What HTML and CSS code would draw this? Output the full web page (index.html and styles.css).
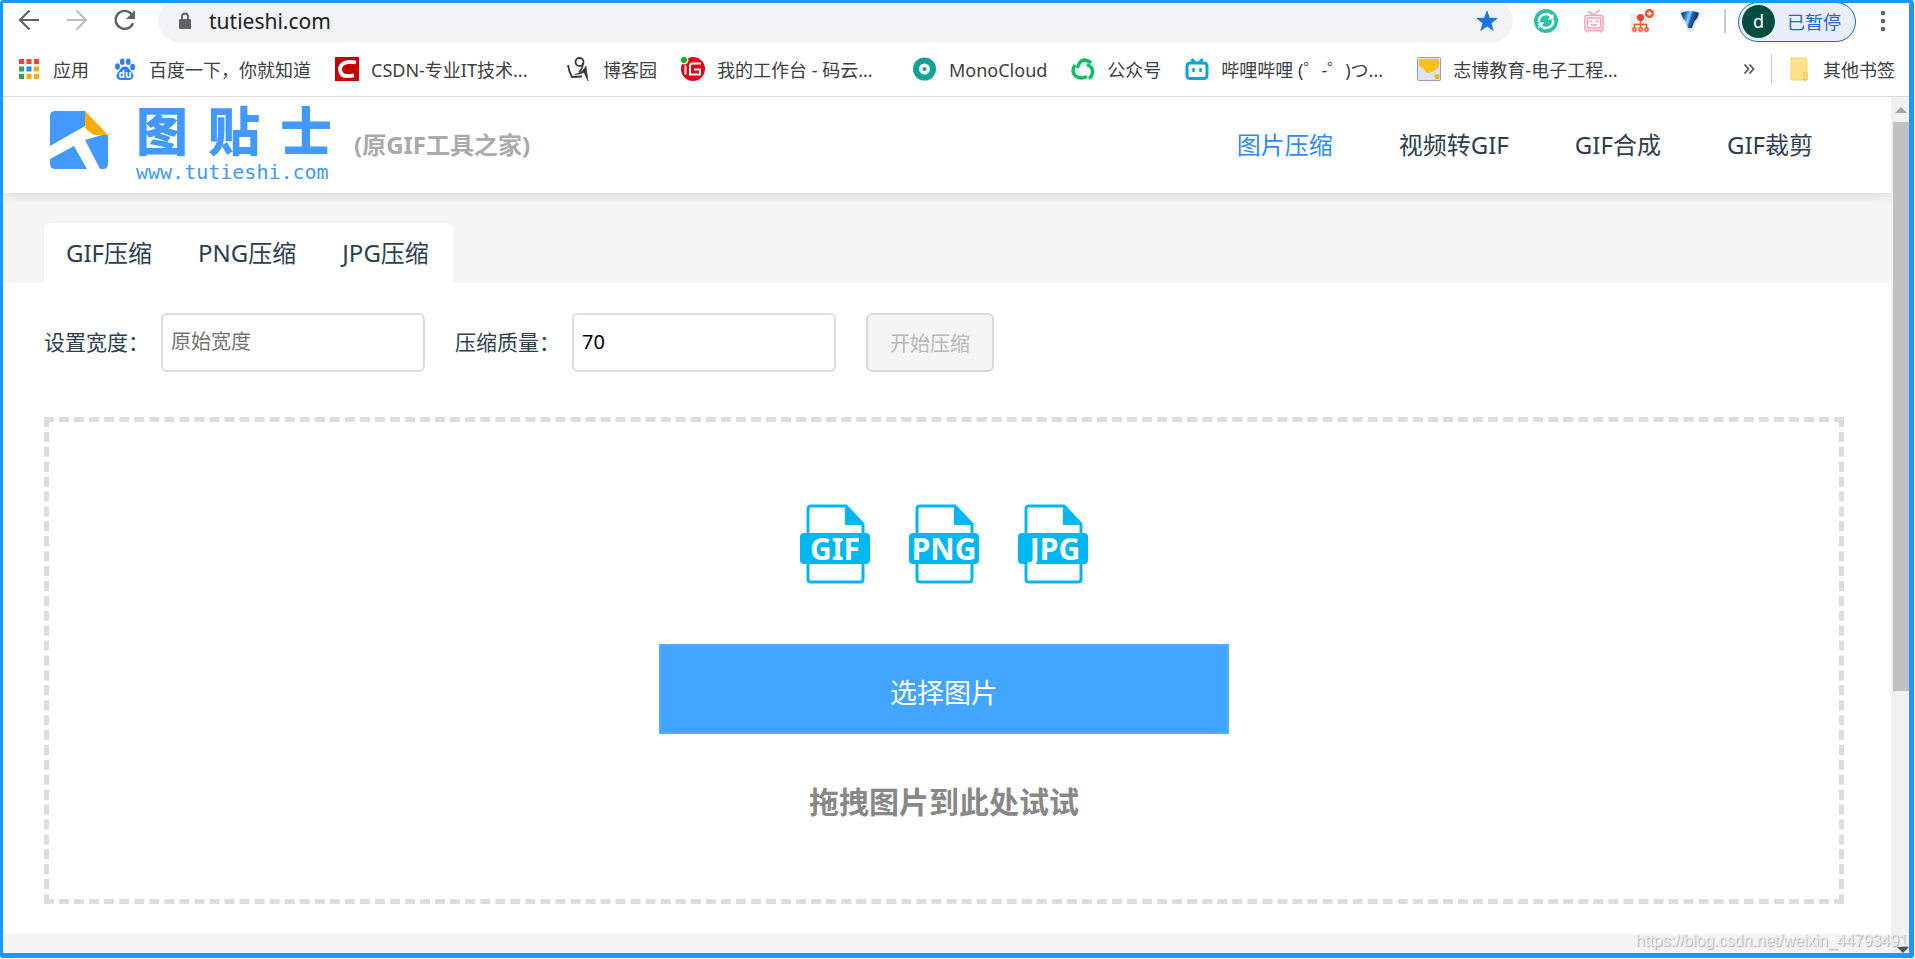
FILE: index.html
```html
<!DOCTYPE html>
<html lang="zh-CN">
<head>
<meta charset="utf-8">
<title>图贴士</title>
<link rel="stylesheet" href="styles.css">
</head>
<body>
<div class="window">
  <div class="toolbar">
    <div class="nav-buttons">
      <button class="icon-button" aria-label="后退"><svg width="24" height="24" viewBox="0 0 24 24" fill="none" stroke="#5f6368" stroke-width="2.2"><path d="M22 12H3.5M12.5 2.5L3 12l9.500 9.500"/></svg></button>
      <button class="icon-button" aria-label="前进"><svg width="24" height="24" viewBox="0 0 24 24" fill="none" stroke="#babcbe" stroke-width="2.200"><path d="M2 12h18.500M11.500 2.500L21 12l-9.500 9.500"/></svg></button>
      <button class="icon-button" aria-label="刷新"><svg width="24" height="24" viewBox="0 0 24 24"><path d="M20 15.200A9 9 0 1 1 18.500 6" fill="none" stroke="#5f6368" stroke-width="2.400"/><path d="M22 2v9h-9z" fill="#5f6368"/></svg></button>
    </div>
    <div class="omnibox">
      <svg width="14" height="18" viewBox="0 0 14 18"><rect x="1" y="7" width="12" height="10" rx="1" fill="#5f6368"/><path d="M4 8V4.500a3 3 0 0 1 6 0V8" fill="none" stroke="#5f6368" stroke-width="1.800"/></svg>
      <input class="address" type="text" value="tutieshi.com" aria-label="地址">
      <button class="icon-button" aria-label="收藏"><svg width="24" height="24" viewBox="0 0 24 24"><path d="M12 1l2.800 7.800 8.200.3-6.500 5.100 2.300 8L12 17.500 5.200 22.200l2.300-8L1 9.100l8.200-.3z" fill="#1a73e8"/></svg></button>
    </div>
    <div class="extensions">
      <svg width="24" height="24" viewBox="0 0 24 24"><circle cx="12" cy="12" r="12" fill="#2fc0a4"/><g fill="none" stroke="#fff" stroke-width="2.400"><path d="M5 13a7 7 0 0 1 12.500-5.200M19 11a7 7 0 0 1-12.500 5.200"/></g><path d="M19.500 4.500v6h-6zM4.500 19.500v-6h6z" fill="#fff"/></svg>
      <svg width="24" height="24" viewBox="0 0 24 24" fill="none" stroke="#f99fbc" stroke-width="1.500"><rect x="3" y="6.500" width="18" height="15" rx="1.500"/><rect x="5.500" y="9" width="13" height="10"/><path d="M12 6L6 2.500M12 6l5.500-5M5 21.500v2M19 21.500v2M7.500 13l2.500-1M16.500 13L14 12M9.500 15c0 2 2.500 2 2.500 0 0 2 2.500 2 2.500 0"/></svg>
      <svg width="24" height="24" viewBox="0 0 24 24"><rect x="0" y="5" width="20" height="19" rx="2" fill="#eee"/><g fill="none" stroke="#f05a28" stroke-width="1.500"><path d="M10.500 10v9M4.500 19v-3.500h12V19"/><circle cx="4.500" cy="20.500" r="1.700"/><circle cx="10.500" cy="20.500" r="1.700"/><circle cx="16.500" cy="20.500" r="1.700"/></g><circle cx="10.500" cy="8.500" r="3.500" fill="#f0402c"/><circle cx="19.500" cy="4.500" r="4.500" fill="#ff4b20"/><path d="M19.500 2v5M17 4.500h5" stroke="#fff" stroke-width="1.500"/></svg>
      <svg width="24" height="24" viewBox="0 0 24 24"><defs><linearGradient id="pin" x1="0" x2="1" y2=".3"><stop offset="0" stop-color="#111c30"/><stop offset=".3" stop-color="#1a7ed8"/><stop offset=".5" stop-color="#8fd2ff"/><stop offset=".65" stop-color="#1560b8"/><stop offset="1" stop-color="#061c4c"/></linearGradient></defs><path d="M4 2q9-3 17 0 3 3 0 8l-5 7v5q-3 2-7 0v-4L3 10Q0 5 4 2z" fill="#e4e4e4"/><path d="M3 4q9-4 18 0-1 5-5 9l-2 6h-4l-2-6Q4 9 3 4z" fill="url(#pin)"/></svg>
    </div>
    <div class="account">
      <button class="profile"><span class="avatar">d</span><span>已暂停</span></button>
      <button class="icon-button menu-button" aria-label="菜单"><svg width="6" height="22" viewBox="0 0 6 22" fill="#5f6368"><circle cx="3" cy="3" r="2.300"/><circle cx="3" cy="11" r="2.300"/><circle cx="3" cy="19" r="2.300"/></svg></button>
    </div>
  </div>

  <nav class="bookmarks" aria-label="书签">
    <a class="bookmark" href="#"><svg width="24" height="24" viewBox="0 0 24 24"><g fill="#f04336"><path d="M2 2h5v5H2zM9.500 2h5v5h-5zM17 2h5v5h-5z"/></g><path d="M2 9.500h5v5H2zM2 17h5v5H2z" fill="#34a160"/><path d="M9.500 9.500h5v5h-5z" fill="#1e8cf0"/><path d="M17 9.500h5v5h-5zM9.500 17h5v5h-5zM17 17h5v5h-5z" fill="#f9ab08"/></svg><span>应用</span></a>
    <a class="bookmark" href="#"><svg width="24" height="24" viewBox="0 0 24 24" fill="#2b7fff"><ellipse cx="4.500" cy="9.500" rx="2.400" ry="3.200"/><ellipse cx="9.300" cy="4.800" rx="2.300" ry="3.200"/><ellipse cx="15.300" cy="4.800" rx="2.300" ry="3.200"/><ellipse cx="19.600" cy="10" rx="2.400" ry="3.200"/><path d="M12 9.500c4 0 4 3 7 6s1 7.500-3 7.500H8c-4 0-6-4-3-7.500s3-6 7-6z"/><text x="12" y="21" class="paw-text">du</text></svg><span>百度一下，你就知道</span></a>
    <a class="bookmark" href="#"><svg width="24" height="24" viewBox="0 0 24 24"><path d="M0 0h24v24H0z" fill="#c90000"/><path d="M21 5.500q-7-1.500-11.500.5Q5 8 5 12.500 5.500 19 12 19q4 0 7-.6" fill="none" stroke="#fff" stroke-width="3.800"/></svg><span class="clipped">CSDN-专业IT技术...</span></a>
    <a class="bookmark" href="#"><svg width="24" height="24" viewBox="0 0 24 24" fill="none" stroke="#3b3936"><circle cx="12.500" cy="5" r="4" stroke-width="1.800"/><path d="M1 8q1 7 4 12l10-.5" stroke-width="1.800"/><path d="M19 9q-3 6-11 8.500 6-.5 9-2l4 8.500-2-15z" fill="#3b3936" stroke-width=".6"/><path d="M16 6q0 5-4 9" stroke-width="1.600"/></svg><span>博客园</span></a>
    <a class="bookmark" href="#"><svg width="24" height="24" viewBox="0 0 24 24"><circle cx="12" cy="12" r="12" fill="#dc0a18"/><circle cx="3" cy="3" r="4.500" fill="#fff"/><circle cx="3" cy="3" r="3" fill="#00b50b"/><path d="M20 6.500h-8.500q-2.500 0-2.500 2.500v8.500h10v-5h-6M4.500 8.500v9" fill="none" stroke="#fff" stroke-width="2"/></svg><span class="clipped">我的工作台 - 码云...</span></a>
    <a class="bookmark" href="#"><svg width="24" height="24" viewBox="0 0 24 24"><circle cx="11.500" cy="12" r="11.500" fill="#13a294"/><circle cx="11.500" cy="12" r="5.500" fill="#fff"/><circle cx="11.500" cy="12" r="2" fill="#13a294"/></svg><span>MonoCloud</span></a>
    <a class="bookmark" href="#"><svg width="24" height="24" viewBox="0 0 24 24" fill="none" stroke="#07c160" stroke-width="3.400"><path d="M6.500 11Q8 4 13 3q4 0 7 3"/><path d="M4 8Q0 14 4 18.500q5 4.500 12 1"/><path d="M16 7.500q6 2.500 5.500 8-.5 4-3.500 6"/></svg><span>公众号</span></a>
    <a class="bookmark" href="#"><svg width="24" height="24" viewBox="0 0 24 24" fill="none" stroke="#05a6dc" stroke-width="3"><rect x="2" y="6" width="20" height="15.500" rx="3"/><path d="M6.500 2l3 3.500M17.500 2l-3 3.500"/><path d="M8.500 11v4M15.500 11v4" stroke-width="2.400"/></svg><span class="clipped">哔哩哔哩 (゜-゜)つ...</span></a>
    <a class="bookmark" href="#"><svg width="24" height="24" viewBox="0 0 24 24"><rect x=".5" y=".5" width="23" height="23" rx="1" fill="#dce5f5" stroke="#8ba0c4"/><path d="M2 2h20v5q0 5-4 6-3 3-6 3-4 0-5-4-5-2-5-5z" fill="#fbc11b"/><circle cx="20" cy="19.500" r="2.600" fill="#f5b514"/></svg><span class="clipped">志博教育-电子工程...</span></a>
    <div class="bookmarks-end">
      <button class="icon-button" aria-label="更多书签"><svg width="12" height="12" viewBox="0 0 12 12" fill="none" stroke="#55585c" stroke-width="1.800"><path d="M1.500 1.500L5.500 6l-4 4.500M6.500 1.500l4 4.500-4 4.500"/></svg></button>
      <a class="bookmark folder" href="#"><svg width="18" height="24" viewBox="0 0 18 24"><path d="M1 1h14q2 0 2 2v20H1z" fill="#ffe28a" stroke="#f7d568"/><path d="M14 23v-7q3-1 3 1v6z" fill="#ffe28a" stroke="#e6bd42"/></svg><span>其他书签</span></a>
    </div>
  </nav>

  <div class="viewport">
    <div class="page">
      <header class="site-header">
        <a class="brand" href="#">
          <svg width="58" height="58" viewBox="0 0 58 58"><path d="M5 0h30v15L0 35V5q0-5 5-5zM0 48l24-13 13 23H5q-5 0-5-5zM35 29l17-5h6v29q0 5-5 5h-3z" fill="#4299ff"/><path d="M35 0l23 24H44l-7-5q-2-2-2-5z" fill="#ffad00"/></svg>
          <span class="wordmark"><span class="name"><span>图</span><span>贴</span><span>士</span></span><span class="domain">www.tutieshi.com</span></span>
        </a>
        <strong class="former-name">(原GIF工具之家)</strong>
        <nav class="site-nav">
          <a class="active" href="#">图片压缩</a>
          <a href="#">视频转GIF</a>
          <a href="#">GIF合成</a>
          <a href="#">GIF裁剪</a>
        </nav>
      </header>
      <div class="tab-strip">
        <nav class="tabs"><a href="#">GIF压缩</a><a href="#">PNG压缩</a><a href="#">JPG压缩</a></nav>
      </div>
      <main class="content">
        <form class="settings">
          <label for="width">设置宽度：</label>
          <input class="field" id="width" type="text" placeholder="原始宽度">
          <label for="quality">压缩质量：</label>
          <input class="field" id="quality" type="text" value="70">
          <button class="start" type="button" disabled>开始压缩</button>
        </form>
        <section class="dropzone">
          <div class="formats">
            <svg class="format" viewBox="0 0 70 80"><path d="M8 29V5q0-3 3-3h35l17 18v9M8 59v16q0 3 3 3h49q3 0 3-3V59" class="outline"/><path d="M45 1l19 20H45z"/><rect y="29" width="70" height="31" rx="4"/><text x="35" y="56">GIF</text></svg>
            <svg class="format" viewBox="0 0 70 80"><path d="M8 29V5q0-3 3-3h35l17 18v9M8 59v16q0 3 3 3h49q3 0 3-3V59" class="outline"/><path d="M45 1l19 20H45z"/><rect y="29" width="70" height="31" rx="4"/><text x="35" y="56">PNG</text></svg>
            <svg class="format" viewBox="0 0 70 80"><path d="M8 29V5q0-3 3-3h35l17 18v9M8 59v16q0 3 3 3h49q3 0 3-3V59" class="outline"/><path d="M45 1l19 20H45z"/><rect y="29" width="70" height="31" rx="4"/><text x="37" y="56">JPG</text></svg>
          </div>
          <button class="choose" type="button">选择图片</button>
          <p class="hint">拖拽图片到此处试试</p>
        </section>
      </main>
    </div>
    <div class="scrollbar">
      <svg class="arrow-up" width="12" height="6" viewBox="0 0 12 6"><path d="M6 0l6 6H0z" fill="#a3a3a3"/></svg>
      <div class="thumb"></div>
      <svg class="arrow-down" width="12" height="6" viewBox="0 0 12 6"><path d="M0 0h12L6 6z" fill="#505050"/></svg>
    </div>
  </div>
  <div class="watermark">https://blog.csdn.net/weixin_44793491</div>
</div>
</body>
</html>
```
FILE: styles.css
```css
* {
  box-sizing: border-box;
}

body {
  margin: 0;
  background: #fff;
  font-family: "Noto Sans", "Noto Sans CJK SC", sans-serif;
  color: #2c3e50;
}

a {
  color: inherit;
  text-decoration: none;
}

button,
input {
  font-family: inherit;
}

svg {
  display: block;
  flex: none;
}

.window {
  position: relative;
  display: flex;
  flex-direction: column;
  height: calc(100vh - 1px);
  margin-right: 1px;
  overflow: hidden;
  border: solid #1a9aff;
  border-width: 3px 5px 5px 3px;
  border-radius: 3px;
}

/* Browser toolbar */

.toolbar {
  display: flex;
  flex: none;
  align-items: flex-end;
  height: 39px;
  overflow: hidden;
}

.icon-button {
  display: flex;
  padding: 0;
  border: 0;
  background: none;
}

.nav-buttons {
  display: flex;
  gap: 24px;
  padding: 0 21px 10px 14px;
}

.omnibox {
  display: flex;
  flex: 1;
  align-items: center;
  height: 42px;
  padding: 2px 14px 2px 20px;
  border-radius: 21px;
  background: #f1f3f4;
}

.address {
  flex: 1;
  min-width: 0;
  margin-left: 17px;
  padding: 0;
  border: 0;
  background: none;
  font-size: 21px;
  line-height: 28px;
  color: #202124;
}

.extensions {
  display: flex;
  gap: 24px;
  padding: 0 22px 9px 21px;
}

.account {
  display: flex;
  align-items: flex-end;
}

.account::before {
  content: "";
  width: 2px;
  height: 24px;
  margin: 0 12px 9px 0;
  background: #ccc;
}

.profile {
  display: flex;
  align-items: center;
  gap: 12px;
  height: 40px;
  padding: 0 14px 2px 3px;
  border: 1px solid #1b66d0;
  border-radius: 20px;
  background: #e9eefa;
  font-size: 18px;
  color: #1b66d0;
}

.avatar {
  width: 33px;
  height: 33px;
  border-radius: 50%;
  background: #004d40;
  font-size: 18px;
  line-height: 32px;
  text-align: center;
  color: #fff;
}

.menu-button {
  padding: 0 23px 10px 24px;
}

/* Bookmarks bar */

.bookmarks {
  display: flex;
  flex: none;
  align-items: center;
  gap: 24px;
  height: 55px;
  padding: 0 14px;
  border-bottom: 1px solid #d9dbdf;
  font-size: 18px;
  line-height: 28px;
  white-space: nowrap;
  color: #3c4043;
}

.bookmark {
  display: flex;
  align-items: center;
  gap: 12px;
}

.bookmark span {
  padding-top: 2px;
}

.clipped {
  width: 172px;
}

.bookmarks-end {
  display: flex;
  align-items: center;
  gap: 16px;
  margin-left: auto;
}

.folder {
  gap: 15px;
  padding-left: 18px;
  border-left: 1px solid #ccc;
}

/* Page */

.viewport {
  display: flex;
  flex: 1;
  min-height: 0;
}

.page {
  flex: 1;
  overflow: hidden;
  background: #f5f5f5;
}

.site-header {
  display: flex;
  align-items: center;
  height: 96px;
  padding: 0 78px 4px 47px;
  background: #fff;
  box-shadow: 0 2px 12px rgba(0, 0, 0, .12);
  font-size: 24px;
}

.brand {
  display: flex;
  align-items: center;
  gap: 28px;
  padding-bottom: 6px;
  color: #4299ff;
}

.wordmark {
  display: flex;
  flex-direction: column;
  gap: 8px;
  width: 196px;
  padding-top: 6px;
}

.name {
  display: flex;
  justify-content: space-between;
  font-family: "Noto Sans CJK SC", sans-serif;
  font-size: 52px;
  font-weight: 900;
  line-height: 50px;
}

.domain {
  font-family: "DejaVu Sans Mono", monospace;
  font-size: 20px;
  line-height: 20px;
}

.former-name {
  margin-left: 22px;
  color: #aaa;
}

.site-nav {
  display: flex;
  gap: 66px;
  margin-left: auto;
}

.active {
  color: #2d8cff;
}

.tab-strip {
  padding: 30px 41px 0;
}

.tabs {
  display: inline-flex;
  gap: 46px;
  height: 60px;
  padding: 0 24px 0 22px;
  border-radius: 6px 6px 0 0;
  background: #fff;
  font-size: 24px;
  line-height: 60px;
  vertical-align: top;
}

.content {
  padding: 30px 47px 30px 41px;
  background: #fff;
}

.settings {
  display: flex;
  align-items: center;
  font-size: 21px;
}

.settings label {
  padding-bottom: 3px;
}

.field {
  width: 264px;
  height: 59px;
  margin: 0 30px 0 12px;
  padding: 0 8px 2px;
  border: 2px solid #ddd;
  border-radius: 6px;
  background: #fff;
  font-size: 20px;
  color: #000;
}

.field::placeholder {
  color: #757575;
}

.start {
  width: 128px;
  height: 59px;
  padding: 0;
  border: 2px solid #d9d9d9;
  border-radius: 6px;
  background: #f5f5f5;
  font-size: 20px;
  color: #b8b8b8;
}

.dropzone {
  display: flex;
  flex-direction: column;
  align-items: center;
  margin-top: 45px;
  padding: 82px 20px 75px;
  border: 5px dashed #ddd;
}

.formats {
  display: flex;
  gap: 39px;
}

.format {
  width: 70px;
  height: 80px;
  fill: #00b7f1;
}

.format .outline {
  fill: none;
  stroke: #00b7f1;
  stroke-width: 3;
}

.format text {
  font-size: 30px;
  font-weight: 700;
  text-anchor: middle;
  fill: #fff;
}

.paw-text {
  font-size: 10px;
  font-weight: 700;
  text-anchor: middle;
  fill: #fff;
}

.choose {
  width: 570px;
  max-width: 100%;
  height: 90px;
  margin-top: 60px;
  padding: 4px 0 0;
  border: 2px solid #4facff;
  background: #42a5ff;
  font-size: 27px;
  color: #fff;
}

.hint {
  margin: 46px 0 0;
  font-size: 30px;
  font-weight: 700;
  line-height: 44px;
  color: #888;
}

.scrollbar {
  display: flex;
  flex: none;
  flex-direction: column;
  width: 18px;
  background: #f1f1f1;
}

.arrow-up {
  margin: 10px 0 9px 4px;
}

.thumb {
  flex: 0 0 66.5%;
  margin-left: 2px;
  background: #c1c1c1;
}

.arrow-down {
  margin: auto 0 0 6px;
}

.watermark {
  position: absolute;
  right: 1px;
  bottom: 2px;
  font-family: "Liberation Sans", sans-serif;
  font-size: 16px;
  line-height: 20px;
  color: #eee;
  text-shadow: 1px 1px 1px #aaa;
}
```
